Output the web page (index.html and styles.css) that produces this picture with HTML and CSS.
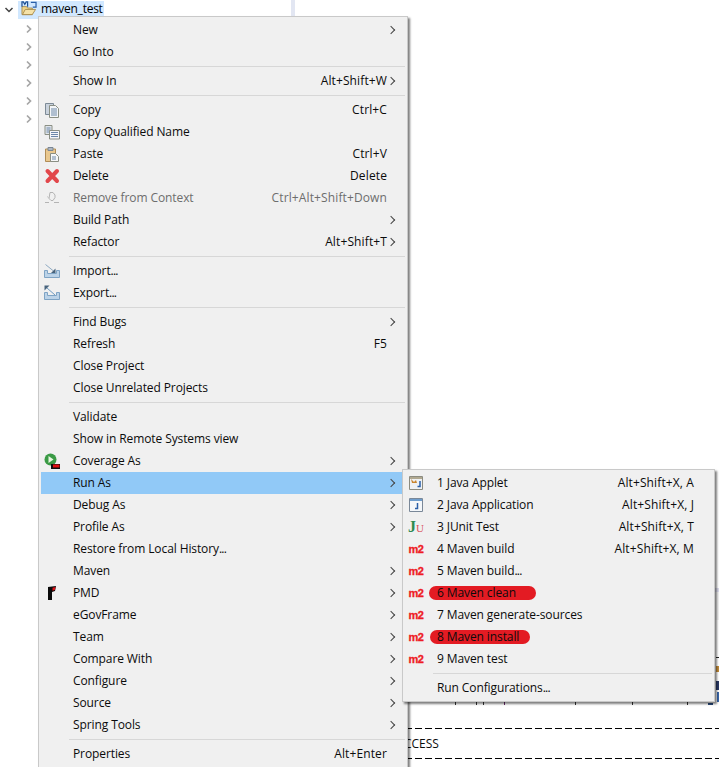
FILE: index.html
```html
<!DOCTYPE html>
<html lang="en">
<head>
<meta charset="utf-8">
<title>Run As menu</title>
<link rel="stylesheet" href="styles.css">
</head>
<body>
<svg class="defs" width="0" height="0">
  <defs>
    <symbol id="i-copy" viewBox="0 0 16 16">
      <path d="M1.500 1.500h8v11h-8z" fill="#c9d2dc" stroke="#7d8a96"/>
      <path d="M5.500 3.500h6l3 3v9h-9z" fill="#f4f6f8" stroke="#8a8f84"/>
      <path d="M7 7h6M7 9h6M7 11h6M7 13h6" stroke="#6d88a8"/>
    </symbol>
    <symbol id="i-copyq" viewBox="0 0 16 16">
      <path d="M1 1.500h7v9H1z" fill="#dfe4ea" stroke="#8a8f84"/>
      <path d="M2.500 4h4M2.500 6h4M2.500 8h4" stroke="#6d88a8"/>
      <path d="M5.500 6.500h10v8.500h-10z" fill="#f4f6f8" stroke="#8a8f84"/>
      <path d="M7 8.500h7M7 10.500h7M7 12.500h7" stroke="#6d88a8"/>
    </symbol>
    <symbol id="i-paste" viewBox="0 0 16 16">
      <path d="M1.500 3h10v12.500h-10z" fill="#e9c88f" stroke="#b08d57"/>
      <path d="M4 1.500h5v3H4z" fill="#aeb7c2" stroke="#7b8794"/>
      <path d="M6.500 7.500h5l3 3v5h-8z" fill="#f6f7f8" stroke="#8a8f84"/>
      <path d="M8 11h4M8 13h4" stroke="#6d88a8"/>
    </symbol>
    <symbol id="i-delete" viewBox="0 0 16 16">
      <path d="M3.500 3l9.500 10M13 3L3.500 13" stroke="#e2474b" stroke-width="4" stroke-linecap="round"/>
    </symbol>
    <symbol id="i-remove" viewBox="0 0 16 16">
      <path d="M6 2.500h3l2 2.500v2.500l-2 3H7L5 8.500z" fill="none" stroke="#b4b4b4"/>
      <path d="M1 12.500h4M10 12.500h5" stroke="#b4b4b4"/>
      <path d="M3 6.500l3 2" stroke="#c8c8c8"/>
    </symbol>
    <symbol id="i-import" viewBox="0 0 16 16">
      <path d="M.5 7.500h3v3h9v-3h3v7H.5z" fill="#bcd3e8" stroke="#7ea3c4"/>
      <path d="M1.500 1.500l8 6.500" stroke="#8da9c2"/>
      <path d="M11.500 10V5.500L7 10z" fill="#47637c"/>
    </symbol>
    <symbol id="i-export" viewBox="0 0 16 16">
      <path d="M.5 7.500h3v3h9v-3h3v7H.5z" fill="#bcd3e8" stroke="#7ea3c4"/>
      <path d="M3 3l8 7" stroke="#6f9cc4"/>
      <path d="M.5.500h5l-5 5z" fill="#47637c"/>
    </symbol>
    <symbol id="i-coverage" viewBox="0 0 16 16">
      <circle cx="6.500" cy="6.500" r="6" fill="#3a9a45"/>
      <path d="M4.500 3l5 3.500-5 3.500z" fill="#e8f6e0"/>
      <path d="M7 11h9v5H7z" fill="#111"/>
      <path d="M9 11.500h6.500v3H9z" fill="#e01010"/>
    </symbol>
    <symbol id="i-pmd" viewBox="0 0 16 16">
      <path d="M4 2l8-1-1 5-3 1v8H4z" fill="#0a0a0a"/>
      <path d="M8.500 2.800l3-.8-.6 3-2.400.8z" fill="#e01018"/>
    </symbol>
    <symbol id="i-applet" viewBox="0 0 16 16">
      <path d="M1.500 1.500h13v13h-13z" fill="#eef1f4" stroke="#8b8b80"/>
      <path d="M2 2h12v2H2z" fill="#b0a890"/>
      <path d="M3 4l3 3 2-2 1 3H4z" fill="#c9852e"/>
      <path d="M12 6v5.500H9.500" fill="none" stroke="#2a5fa8" stroke-width="1.500"/>
    </symbol>
    <symbol id="i-app" viewBox="0 0 16 16">
      <path d="M1.500 1.500h13v13h-13z" fill="#f4f7fa" stroke="#7a8898"/>
      <path d="M2 2h12v2H2z" fill="#6f9dcc"/>
      <path d="M9.500 6v5.500H7" fill="none" stroke="#2a5fa8" stroke-width="1.500"/>
    </symbol>
    <symbol id="i-project" viewBox="0 0 18 16">
      <path d="M1.500 6h5l1 1.500h5v7h-11z" fill="#f0d48a" stroke="#a98d4e"/>
      <path d="M2 14.500l3-5.500h11l-3.500 5.500z" fill="#f5e2a8" stroke="#a98d4e"/>
      <path d="M11 1.500H16.500V6.500H13" fill="none" stroke="#2a5fa8" stroke-width="1.300"/>
      <path d="M1.500 6V1h1.500L4.500 3.500 6 1h1.500v5" fill="none" stroke="#1e4f94" stroke-width="1.300"/>
    </symbol>
  </defs>
</svg>

<div class="page">
  <aside class="tree">
    <div class="tree-root">
      <svg class="twist" viewBox="0 0 10 10"><path d="M1.500 3l3.500 3.500L8.500 3" fill="none" stroke="#444" stroke-width="1.500"/></svg>
      <span class="tree-sel">
        <svg class="project" viewBox="0 0 18 16"><use href="#i-project"/></svg>
        <span>maven_test</span>
      </span>
    </div>
    <div class="tree-row"><svg class="twist" viewBox="0 0 10 10"><path d="M3 1.500L6.500 5 3 8.500" fill="none" stroke="#a6a6a6" stroke-width="1.700"/></svg></div>
    <div class="tree-row"><svg class="twist" viewBox="0 0 10 10"><path d="M3 1.500L6.500 5 3 8.500" fill="none" stroke="#a6a6a6" stroke-width="1.700"/></svg></div>
    <div class="tree-row"><svg class="twist" viewBox="0 0 10 10"><path d="M3 1.500L6.500 5 3 8.500" fill="none" stroke="#a6a6a6" stroke-width="1.700"/></svg></div>
    <div class="tree-row"><svg class="twist" viewBox="0 0 10 10"><path d="M3 1.500L6.500 5 3 8.500" fill="none" stroke="#a6a6a6" stroke-width="1.700"/></svg></div>
    <div class="tree-row"><svg class="twist" viewBox="0 0 10 10"><path d="M3 1.500L6.500 5 3 8.500" fill="none" stroke="#a6a6a6" stroke-width="1.700"/></svg></div>
    <div class="tree-row"><svg class="twist" viewBox="0 0 10 10"><path d="M3 1.500L6.500 5 3 8.500" fill="none" stroke="#a6a6a6" stroke-width="1.700"/></svg></div>
  </aside>
  <div class="sash"></div>
  <main class="console">
    <div class="strip"></div>
    <div class="fragments">
      <span class="tick t1"></span><span class="tick t2"></span><span class="tick t3"></span><span class="tick t4"></span><span class="tick t5"></span><span class="tick t6"></span><span class="tick t7"></span><span class="tick t8"></span>
      <span class="edge e1"></span><span class="edge e2"></span><span class="edge e3"></span><span class="edge e4"></span>
    </div>
    <div class="result"><div class="dash"></div><div class="result-text">CCESS</div><div class="dash"></div></div>
  </main>
</div>

<nav class="menu main-menu">
  <div class="row"><span class="ic"></span><span class="lb">New</span><span class="sc"></span><span class="ar"></span></div>
  <div class="row"><span class="ic"></span><span class="lb">Go Into</span><span class="sc"></span><span></span></div>
  <div class="sep"></div>
  <div class="row"><span class="ic"></span><span class="lb">Show In</span><span class="sc">Alt+Shift+W</span><span class="ar"></span></div>
  <div class="sep"></div>
  <div class="row"><span class="ic"><svg viewBox="0 0 16 16"><use href="#i-copy"/></svg></span><span class="lb">Copy</span><span class="sc">Ctrl+C</span><span></span></div>
  <div class="row"><span class="ic"><svg viewBox="0 0 16 16"><use href="#i-copyq"/></svg></span><span class="lb">Copy Qualified Name</span><span class="sc"></span><span></span></div>
  <div class="row"><span class="ic"><svg viewBox="0 0 16 16"><use href="#i-paste"/></svg></span><span class="lb">Paste</span><span class="sc">Ctrl+V</span><span></span></div>
  <div class="row"><span class="ic"><svg viewBox="0 0 16 16"><use href="#i-delete"/></svg></span><span class="lb">Delete</span><span class="sc">Delete</span><span></span></div>
  <div class="row off"><span class="ic"><svg viewBox="0 0 16 16"><use href="#i-remove"/></svg></span><span class="lb">Remove from Context</span><span class="sc">Ctrl+Alt+Shift+Down</span><span></span></div>
  <div class="row"><span class="ic"></span><span class="lb">Build Path</span><span class="sc"></span><span class="ar"></span></div>
  <div class="row"><span class="ic"></span><span class="lb">Refactor</span><span class="sc">Alt+Shift+T</span><span class="ar"></span></div>
  <div class="sep"></div>
  <div class="row"><span class="ic"><svg viewBox="0 0 16 16"><use href="#i-import"/></svg></span><span class="lb">Import<span class="dots">...</span></span><span class="sc"></span><span></span></div>
  <div class="row"><span class="ic"><svg viewBox="0 0 16 16"><use href="#i-export"/></svg></span><span class="lb">Export<span class="dots">...</span></span><span class="sc"></span><span></span></div>
  <div class="sep"></div>
  <div class="row"><span class="ic"></span><span class="lb">Find Bugs</span><span class="sc"></span><span class="ar"></span></div>
  <div class="row"><span class="ic"></span><span class="lb">Refresh</span><span class="sc">F5</span><span></span></div>
  <div class="row"><span class="ic"></span><span class="lb">Close Project</span><span class="sc"></span><span></span></div>
  <div class="row"><span class="ic"></span><span class="lb">Close Unrelated Projects</span><span class="sc"></span><span></span></div>
  <div class="sep"></div>
  <div class="row"><span class="ic"></span><span class="lb">Validate</span><span class="sc"></span><span></span></div>
  <div class="row"><span class="ic"></span><span class="lb">Show in Remote Systems view</span><span class="sc"></span><span></span></div>
  <div class="row"><span class="ic"><svg viewBox="0 0 16 16"><use href="#i-coverage"/></svg></span><span class="lb">Coverage As</span><span class="sc"></span><span class="ar"></span></div>
  <div class="row active"><span class="ic"></span><span class="lb">Run As</span><span class="sc"></span><span class="ar"></span></div>
  <div class="row"><span class="ic"></span><span class="lb">Debug As</span><span class="sc"></span><span class="ar"></span></div>
  <div class="row"><span class="ic"></span><span class="lb">Profile As</span><span class="sc"></span><span class="ar"></span></div>
  <div class="row"><span class="ic"></span><span class="lb">Restore from Local History<span class="dots">...</span></span><span class="sc"></span><span></span></div>
  <div class="row"><span class="ic"></span><span class="lb">Maven</span><span class="sc"></span><span class="ar"></span></div>
  <div class="row"><span class="ic"><svg viewBox="0 0 16 16"><use href="#i-pmd"/></svg></span><span class="lb">PMD</span><span class="sc"></span><span class="ar"></span></div>
  <div class="row"><span class="ic"></span><span class="lb">eGovFrame</span><span class="sc"></span><span class="ar"></span></div>
  <div class="row"><span class="ic"></span><span class="lb">Team</span><span class="sc"></span><span class="ar"></span></div>
  <div class="row"><span class="ic"></span><span class="lb">Compare With</span><span class="sc"></span><span class="ar"></span></div>
  <div class="row"><span class="ic"></span><span class="lb">Configure</span><span class="sc"></span><span class="ar"></span></div>
  <div class="row"><span class="ic"></span><span class="lb">Source</span><span class="sc"></span><span class="ar"></span></div>
  <div class="row"><span class="ic"></span><span class="lb">Spring Tools</span><span class="sc"></span><span class="ar"></span></div>
  <div class="sep"></div>
  <div class="row"><span class="ic"></span><span class="lb">Properties</span><span class="sc">Alt+Enter</span><span></span></div>
</nav>

<nav class="menu sub-menu">
  <div class="row"><span class="ic"><svg viewBox="0 0 16 16"><use href="#i-applet"/></svg></span><span class="lb">1 Java Applet</span><span class="sc">Alt+Shift+X, A</span><span></span></div>
  <div class="row"><span class="ic"><svg viewBox="0 0 16 16"><use href="#i-app"/></svg></span><span class="lb">2 Java Application</span><span class="sc">Alt+Shift+X, J</span><span></span></div>
  <div class="row"><span class="ic"><span class="ju"><b class="j">J</b><b class="u">U</b></span></span><span class="lb">3 JUnit Test</span><span class="sc">Alt+Shift+X, T</span><span></span></div>
  <div class="row"><span class="ic"><span class="m2">m2</span></span><span class="lb">4 Maven build</span><span class="sc">Alt+Shift+X, M</span><span></span></div>
  <div class="row"><span class="ic"><span class="m2">m2</span></span><span class="lb">5 Maven build<span class="dots">...</span></span><span class="sc"></span><span></span></div>
  <div class="row"><span class="ic"><span class="m2">m2</span></span><span class="lb"><span class="pill pill-a">6 Maven clean</span></span><span class="sc"></span><span></span></div>
  <div class="row"><span class="ic"><span class="m2">m2</span></span><span class="lb">7 Maven generate-sources</span><span class="sc"></span><span></span></div>
  <div class="row"><span class="ic"><span class="m2">m2</span></span><span class="lb"><span class="pill pill-b">8 Maven install</span></span><span class="sc"></span><span></span></div>
  <div class="row"><span class="ic"><span class="m2">m2</span></span><span class="lb">9 Maven test</span><span class="sc"></span><span></span></div>
  <div class="sep"></div>
  <div class="row"><span class="ic"></span><span class="lb">Run Configurations<span class="dots">...</span></span><span class="sc"></span><span></span></div>
</nav>
</body>
</html>
```

FILE: styles.css
```css
* { box-sizing: border-box; }
html, body { margin: 0; padding: 0; background: #fff; }
body {
  position: relative;
  width: 719px;
  height: 767px;
  overflow: hidden;
  font-family: "Open Sans", "Noto Sans", sans-serif;
  font-size: 12px;
  letter-spacing: -0.1px;
  color: #0b0b0b;
}
.defs { position: absolute; }

.page { display: flex; height: 767px; }

.tree { width: 291px; padding-top: 1px; flex: none; }
.tree-root { display: flex; align-items: center; height: 18px; padding-left: 4px; margin-bottom: 1px; }
.tree-row { display: flex; align-items: center; height: 18px; padding-left: 24px; }
.twist { width: 10px; height: 10px; flex: none; }
.tree-sel {
  display: flex; align-items: center; gap: 3px;
  margin-left: 4px; height: 18px; padding: 0 1px 3px 2px;
  background: #d1e8ff; color: #000;
  letter-spacing: -0.25px;
}
.project { width: 18px; height: 15px; flex: none; }

.sash { width: 4px; flex: none; background: #e2e6f2; }

.console { flex: 1; min-width: 0; position: relative; display: flex; flex-direction: column; }
.strip { height: 32px; margin-top: 588px; background: #f2f2f2; border-top: 4px solid #dcdcec; }
.fragments { height: 85px; position: relative; }
.tick { position: absolute; top: 82px; width: 1px; height: 3px; background: #333; }
.t1 { left: 160px; } .t2 { left: 181px; } .t3 { left: 188px; }
.t4 { left: 209px; background: #6a2a6a; } .t5 { left: 280px; } .t6 { left: 337px; }
.t7 { left: 392px; } .t8 { left: 413px; width: 5px; height: 2px; top: 83px; background: #2a4a7a; }
.edge { position: absolute; left: 421px; width: 3px; }
.e1 { top: 37px; height: 1px; background: #222; }
.e2 { top: 46px; height: 6px; background: #c08a3a; }
.e3 { top: 61px; height: 9px; background: #2a3a66; }
.e4 { top: 72px; height: 10px; width: 2px; left: 422px; background: #3a66a8; }
.result { margin-top: 23px; }
.dash {
  height: 1px;
  background: repeating-linear-gradient(to right, #000 0, #000 7px, transparent 7px, transparent 10px);
}
.result-text {
  height: 29px;
  padding-left: 109px;
  line-height: 29px;
  letter-spacing: 0;
}

.menu {
  position: absolute;
  background: #f0f0f0;
  border: 1px solid #c9c9c9;
  padding: 2px;
  box-shadow: 2px 2px 2px rgba(0, 0, 0, 0.5);
}
.main-menu { left: 38px; top: 16px; width: 370px; }
.sub-menu { left: 402px; top: 469px; width: 313px; }

.row {
  display: grid;
  grid-template-columns: 28px 1fr auto 18px;
  align-items: center;
  height: 22px;
  line-height: 22px;
  white-space: nowrap;
}
.lb { padding-left: 4px; }
.sc { text-align: right; letter-spacing: 0.12px; }
.dots { letter-spacing: -0.8px; }
.ic { display: flex; align-items: center; justify-content: flex-start; height: 22px; padding-left: 3px; }
.ic svg { width: 16px; height: 16px; display: block; }
.ar { justify-self: end; position: relative; width: 18px; height: 22px; }
.ar::after {
  content: "";
  position: absolute;
  left: 1px; top: 8px;
  width: 5px; height: 5px;
  border-top: 1px solid #444;
  border-right: 1px solid #444;
  transform: rotate(45deg);
}
.active { background: #91c9f7; }
.off { color: #6d6d6d; }
.sep { height: 7px; margin-left: 28px; position: relative; }
.sep::after { content: ""; position: absolute; left: 0; right: 0; top: 3px; height: 1px; background: #d7d7d7; }

.pill {
  display: inline-block;
  height: 14px;
  line-height: 14px;
  border-radius: 7px;
  background: #e31b23;
}
.pill-a { margin-left: -8px; padding: 0 20px 0 8px; }
.pill-b { margin-left: -7px; padding: 0 11px 0 7px; }

.m2 {
  width: 16px;
  text-align: center;
  font-family: "Liberation Sans", sans-serif;
  font-weight: 700;
  font-size: 11px;
  line-height: 16px;
  color: #ee1c25;
  letter-spacing: -0.4px;
  -webkit-text-stroke: 0.3px #ee1c25;
}
.ju { width: 16px; font-family: "Liberation Serif", serif; line-height: 16px; letter-spacing: 0; white-space: nowrap; }
.ju .j { color: #2f8a50; font-size: 16px; }
.ju .u { color: #d9505a; font-weight: 400; font-size: 11px; }
```
